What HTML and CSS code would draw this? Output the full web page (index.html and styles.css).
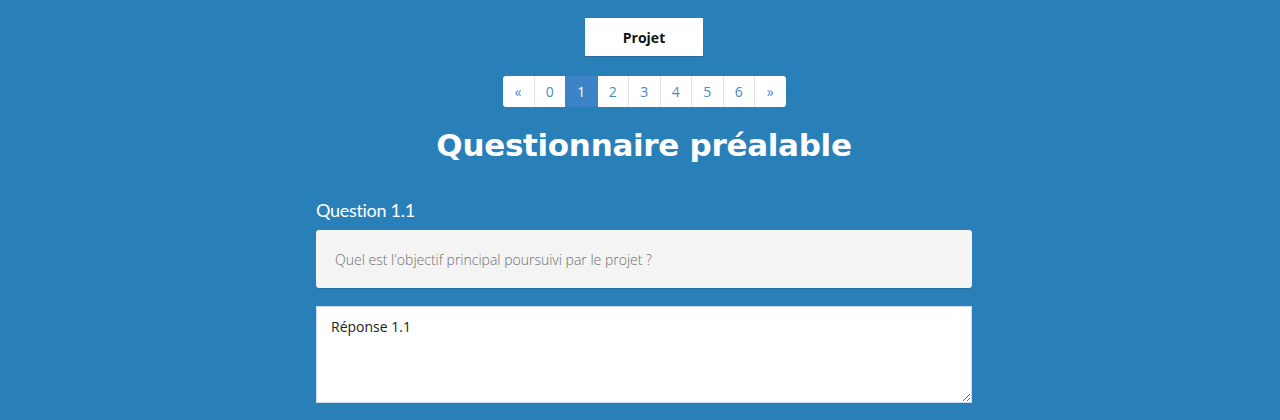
FILE: index.html
```html
<!DOCTYPE html>
<html lang="fr">
<head>
<meta charset="utf-8">
<title>Questionnaire préalable</title>
<link rel="stylesheet" href="styles.css">
</head>
<body>
<div class="page">
  <div class="top">
    <button class="projet">Projet</button>
  </div>
  <nav class="pager">
    <a class="pg">&laquo;</a>
    <a class="pg">0</a>
    <a class="pg active">1</a>
    <a class="pg">2</a>
    <a class="pg">3</a>
    <a class="pg">4</a>
    <a class="pg">5</a>
    <a class="pg">6</a>
    <a class="pg">&raquo;</a>
  </nav>
  <h1 class="title">Questionnaire préalable</h1>
  <section class="question">
    <h2 class="qlabel">Question 1.1</h2>
    <div class="qbox">Quel est l'objectif principal poursuivi par le projet ?</div>
    <textarea class="answer">Réponse 1.1</textarea>
  </section>
</div>
</body>
</html>
```
FILE: styles.css
```css
html, body {
  margin: 0;
  padding: 0;
  background: #2980b9;
  height: 100%;
  overflow: hidden;
}
.page {
  padding-left: 8px;
  display: flex;
  flex-direction: column;
  align-items: center;
  font-family: "Open Sans", "Liberation Sans", sans-serif;
}
.top {
  padding-top: 18px;
}
.projet {
  width: 118px;
  height: 38px;
  background: #fff;
  border: none;
  border-radius: 0;
  font-family: "Open Sans", sans-serif;
  font-weight: 700;
  font-size: 14px;
  color: #111;
  padding: 0;
  box-shadow: 0 1px 1px rgba(0,0,0,0.15);
}
.pager {
  margin-top: 20px;
  display: flex;
  background: #fff;
  border-radius: 3px;
  overflow: hidden;
  height: 31px;
}
.pg {
  width: 31.5px;
  box-sizing: border-box;
  display: flex;
  align-items: center;
  justify-content: center;
  font-size: 14px;
  color: #4a89c8;
  border-left: 1px solid #e1e1e1;
}
.pg:first-child { border-left: none; width: 31px; }
.pg.active {
  background: #3c84c5;
  color: #fff;
  border-left-color: #3c84c5;
}
.pg.active + .pg { border-left-color: #3c84c5; }
.title {
  margin: 16px 0 0;
  font-family: "DejaVu Sans", sans-serif;
  font-weight: 700;
  font-size: 31px;
  line-height: 44px;
  color: #fff;
  letter-spacing: -0.3px;
}
.question {
  width: 656px;
  margin-top: 32px;
  display: flex;
  flex-direction: column;
}
.qlabel {
  margin: 0;
  font-family: "Lato", "DejaVu Sans", sans-serif;
  font-weight: 400;
  font-size: 18px;
  line-height: 22px;
  color: #fff;
  letter-spacing: -0.3px;
}
.qbox {
  margin-top: 9px;
  height: 58px;
  box-sizing: border-box;
  background: #f4f4f4;
  border-radius: 3px;
  padding: 0 19px;
  display: flex;
  align-items: center;
  font-family: "Open Sans", sans-serif;
  font-weight: 300;
  font-size: 14px;
  color: #6f6f6f;
  box-shadow: 0 1px 1px rgba(0,0,0,0.15);
}
.answer {
  margin-top: 18px;
  height: 97px;
  box-sizing: border-box;
  border: 1px solid #c9dcea;
  border-radius: 0;
  background: #fff;
  padding: 10px 14px;
  font-family: "Open Sans", sans-serif;
  font-size: 14px;
  color: #222;
  resize: vertical;
  outline: none;
}
```
